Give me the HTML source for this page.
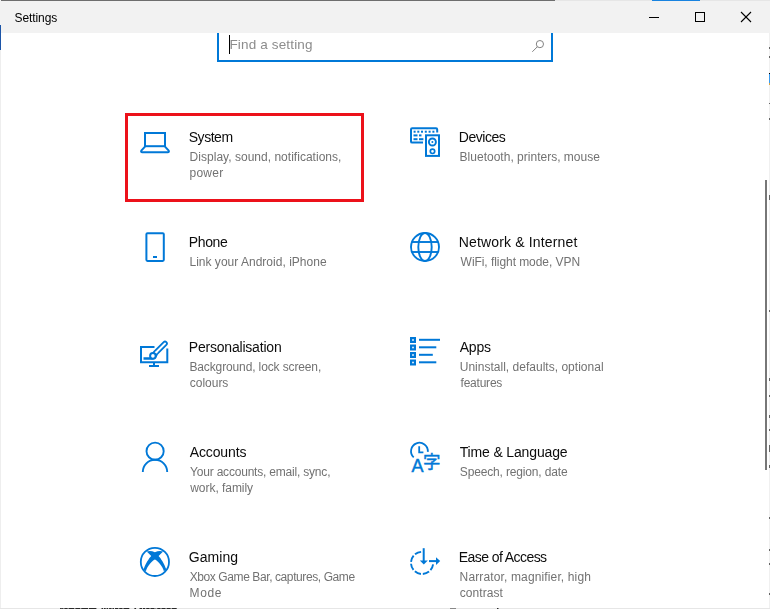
<!DOCTYPE html>
<html lang="en"><head><meta charset="utf-8"><title>Settings</title>
<style>
html,body{margin:0;padding:0;background:#fff}
body{width:770px;height:609px;position:relative;overflow:hidden;font-family:"Liberation Sans","Noto Sans CJK JP",sans-serif}
.a{position:absolute}
.x{position:absolute;white-space:nowrap;line-height:20px;height:20px}
#tb{left:0;top:0;width:770px;height:33px;background:#f2f2f2}
#topl{left:1px;top:0;width:554px;height:1px;background:#6e6e6e}
#topr{left:555px;top:0;width:215px;height:1px;background:#e6e6e6}
#topb{left:652px;top:0;width:48px;height:1px;background:#1883e0}
#le{left:0;top:33px;width:1px;height:576px;background:#eeeeee}
#leb{left:0;top:25px;width:1px;height:25px;background:#1c55a8}
#re{left:769px;top:33px;width:1px;height:576px;background:#f0f0f0}
#reb{left:769px;top:73px;width:1px;height:12px;background:linear-gradient(#000 0 1px,#3a9cf0 1px 10px,#d9a441 10px)}
#sb{left:217px;top:33px;width:332px;height:27px;border:2px solid #0078d7;border-top:none;background:#fff}
#cur{left:229px;top:35px;width:1px;height:19px;background:#000}
#red{left:125px;top:113px;width:233px;height:83px;border:3px solid #ec111a}
#thumb{left:765px;top:180px;width:2px;height:290px;background:#777}
#bot{left:0;top:608px;width:770px;height:1px;background:#e6e6e6}
svg{position:absolute;left:0;top:0}
#txt{position:absolute;left:0;top:0;width:770px;height:609px;will-change:transform}
</style></head><body>
<div class="a" id="tb"></div>
<div class="a" id="topl"></div><div class="a" id="topr"></div><div class="a" id="topb"></div>
<div class="a" id="le"></div><div class="a" id="leb"></div>
<div class="a" id="re"></div><div class="a" id="reb"></div>
<div class="a" id="sb"></div><div class="a" id="cur"></div>
<div class="a" id="red"></div>
<div class="a" id="thumb"></div>
<div class="a" id="bot"></div>
<svg width="770" height="609" viewBox="0 0 770 609" fill="none" stroke="#0078d7" stroke-width="2">
<!-- window controls -->
<g stroke="#000" stroke-width="1" shape-rendering="crispEdges">
<line x1="649" y1="17.5" x2="659" y2="17.5"/>
<rect x="695.5" y="12.5" width="9" height="9"/>
</g>
<g stroke="#000" stroke-width="1.1">
<line x1="741" y1="12" x2="751" y2="22"/><line x1="751" y1="12" x2="741" y2="22"/>
</g>
<!-- search icon -->
<g stroke="#828282" stroke-width="1">
<circle cx="539.9" cy="44.1" r="3.6"/><line x1="537.3" y1="46.8" x2="532.3" y2="51.8"/>
</g>
<!-- system: laptop -->
<rect x="145" y="133" width="20" height="13.2"/>
<path d="M145,146.6 L141.3,150.6 Q140.6,152.2 142.2,152.2 L167.8,152.2 Q169.4,152.2 168.7,150.6 L165,146.6" stroke-linejoin="round"/>
<!-- devices -->
<path d="M423,142.6 L412.2,142.6 Q411,142.6 411,141.4 L411,129.4 Q411,128.2 412.2,128.2 L436,128.2 Q437.2,128.2 437.2,129.4 L437.2,132.6"/>
<rect x="426" y="135.3" width="13" height="20.6"/>
<circle cx="432.4" cy="142" r="3.5" stroke-width="1.9"/><circle cx="432.4" cy="142" r="1" fill="#0078d7" stroke="none"/>
<circle cx="432.5" cy="151.3" r="2.2" stroke-width="1.7"/>
<g fill="#0078d7" stroke="none">
<rect x="413.6" y="130.7" width="2" height="2"/><rect x="417.3" y="130.7" width="2" height="2"/><rect x="421" y="130.7" width="2" height="2"/><rect x="424.8" y="130.7" width="2" height="2"/><rect x="428.6" y="130.7" width="2" height="2"/><rect x="432.4" y="130.7" width="2" height="2"/>
<rect x="413.5" y="134.4" width="4" height="2"/><rect x="419" y="134.4" width="2.5" height="2"/>
<rect x="413.5" y="138.2" width="4" height="2"/><rect x="419" y="138.2" width="4.4" height="2"/>
</g>
<!-- phone -->
<rect x="146.4" y="233.2" width="17.4" height="27.7" rx="1.1"/>
<rect x="153" y="256" width="4" height="2" fill="#0078d7" stroke="none"/>
<!-- globe -->
<g stroke-width="1.9">
<circle cx="425" cy="247" r="14"/><ellipse cx="425" cy="247" rx="6.7" ry="14"/>
<line x1="411.8" y1="242" x2="438.2" y2="242"/><line x1="411.8" y1="252" x2="438.2" y2="252"/>
</g>
<!-- personalisation -->
<path d="M154.5,347 L141,347 L141,362.2 L167.3,362.2 L167.3,348.5"/>
<line x1="154" y1="363" x2="154" y2="366"/><line x1="149" y1="366" x2="159" y2="366"/>
<line x1="155.5" y1="353" x2="165" y2="343.5" stroke-width="5.6" stroke-linecap="round"/>
<line x1="155.5" y1="353" x2="165" y2="343.5" stroke-width="2" stroke-linecap="round" stroke="#fff"/>
<path d="M143.5,358.5 L151,358.5 Q155,358.5 156.5,354.5" stroke-width="2.4"/>
<circle cx="152.9" cy="355.9" r="2.8" fill="#fff" stroke-width="2"/>
<line x1="155.9" y1="351.6" x2="157.4" y2="353.1" stroke="#fff" stroke-width="0.9"/>
<!-- apps -->
<g fill="#0078d7" stroke="none">
<rect x="410" y="337" width="6" height="6"/><rect x="410" y="344.5" width="6" height="6"/><rect x="410" y="352" width="6" height="6"/><rect x="410" y="359.5" width="6" height="6"/>
<rect x="419" y="338.8" width="21" height="2"/><rect x="419" y="346.3" width="17.3" height="2"/><rect x="419" y="353.8" width="13.8" height="2"/><rect x="419" y="361.3" width="17.3" height="2"/>
</g>
<g fill="#fff" stroke="none">
<rect x="412.2" y="339.2" width="1.6" height="1.6"/><rect x="412.2" y="346.7" width="1.6" height="1.6"/><rect x="412.2" y="354.2" width="1.6" height="1.6"/><rect x="412.2" y="361.7" width="1.6" height="1.6"/>
</g>
<!-- accounts -->
<circle cx="155.1" cy="451.2" r="8.6" stroke-width="1.9"/>
<path d="M142.8,472 A12.2,12.2 0 0 1 167.2,472" stroke-width="1.9"/>
<!-- time & language -->
<path d="M413.7,457.3 A8.4,8.4 0 1 1 427.8,451.9" stroke-width="1.8"/>
<path d="M419.2,446.2 L419.2,452.3 L423.4,452.3" stroke-width="1.8"/>
<text x="411.6" y="472" font-family="Liberation Sans, sans-serif" font-size="18" fill="#0078d7" stroke="#0078d7" stroke-width="0.45">A</text>
<text x="423" y="467.9" font-family="Noto Sans CJK JP, Noto Sans CJK SC, sans-serif" font-size="17.5" fill="#0078d7" stroke="#0078d7" stroke-width="0.4">字</text>
<!-- gaming: xbox -->
<circle cx="154.9" cy="561.9" r="14.1" stroke-width="1.8"/>
<path fill="#0078d7" stroke="none" d="M146.7,551.5 Q150.5,550.2 154.9,552.2 Q159.3,550.2 163.1,551.5 L158.6,556.1 C160.5,558 164.5,564 166.3,569.6 L163.9,571.2 C162.6,565.8 157.3,560.6 154.9,559.5 C152.5,560.6 147.2,565.8 145.9,571.2 L143.5,569.6 C145.3,564 149.3,558 151.2,556.1 Z"/>
<!-- ease of access -->
<path d="M421.13,551.84 A11.1,11.1 0 1 0 433.09,564.45" stroke-width="1.9" stroke-dasharray="6.684 1.937"/>
<line x1="423.7" y1="548.2" x2="423.7" y2="561"/>
<path d="M419.8,560.4 L427.8,560.4 L423.8,564.4 Z" fill="#0078d7" stroke="none"/>
<line x1="429" y1="561.1" x2="437" y2="561.1"/>
<path d="M436,557.2 L440.2,561.1 L436,565 Z" fill="#0078d7" stroke="none"/>
<g fill="#2a2a2a" stroke="none"><rect x="60.1" y="608" width="1.7" height="1"/><rect x="62.1" y="608" width="1.4" height="1"/><rect x="64.3" y="608" width="3.4" height="1"/><rect x="68.5" y="608" width="5.9" height="1"/><rect x="75.3" y="608" width="5.1" height="1"/><rect x="81.2" y="608" width="6.8" height="1"/><rect x="88.8" y="608" width="7.6" height="1"/><rect x="101.5" y="608" width="1.7" height="1"/><rect x="104.0" y="608" width="1.7" height="1"/><rect x="106.5" y="608" width="1.7" height="1"/><rect x="109.1" y="608" width="2.5" height="1"/><rect x="112.4" y="608" width="1.7" height="1"/><rect x="115.0" y="608" width="3.4" height="1"/><rect x="119.2" y="608" width="3.4" height="1"/><rect x="123.4" y="608" width="5.9" height="1"/><rect x="134.4" y="608" width="1.7" height="1"/><rect x="139.5" y="608" width="2.5" height="1"/><rect x="142.8" y="608" width="2.5" height="1"/><rect x="146.2" y="608" width="3.4" height="1"/><rect x="150.4" y="608" width="4.2" height="1"/><rect x="155.5" y="608" width="0.8" height="1"/><rect x="157.2" y="608" width="3.4" height="1"/><rect x="161.4" y="608" width="4.2" height="1"/><rect x="166.5" y="608" width="4.2" height="1"/><rect x="171.6" y="608" width="5.1" height="1"/><rect x="450" y="608" width="6" height="1" fill="#888"/><rect x="497" y="608" width="1.5" height="1"/></g>
<g fill="#666" stroke="none"><rect x="769" y="310" width="1" height="2"/><rect x="769" y="378" width="1" height="3"/><rect x="769" y="395" width="1" height="2"/><rect x="769" y="415" width="1" height="3"/><rect x="769" y="429" width="1" height="2"/><rect x="769" y="445" width="1" height="7"/><rect x="769" y="465" width="1" height="3"/><rect x="769" y="517" width="1" height="2"/><rect x="769" y="549" width="1" height="2"/><rect x="769" y="563" width="1" height="2"/><rect x="769" y="593" width="1" height="2"/><rect x="769" y="47" width="1" height="2"/><rect x="769" y="56" width="1" height="2"/><rect x="769" y="103" width="1" height="1"/><rect x="769" y="118" width="1" height="2"/><rect x="769" y="195" width="1" height="5"/></g>
</svg>

<div id="txt">
<header><span class="x w" id="e26" style="left:14.56px;top:7.84px;font-size:12px;letter-spacing:-0.096px;color:#000">Settings</span></header>
<div class="search"><span class="x p" id="e27" style="left:229.47px;top:34.92px;font-size:13.5px;letter-spacing:0.149px;color:#8c8c8c">Find a setting</span></div>
<main>
<div class="tile"><span class="x t" id="e0" style="left:188.75px;top:127.15px;font-size:14px;letter-spacing:-0.469px;color:#0c0c0c">System</span><span class="x d" id="e10" style="left:189.61px;top:147.34px;font-size:12px;letter-spacing:0.020px;color:#727272">Display, sound, notifications,</span><span class="x d" id="e11" style="left:189.58px;top:162.84px;font-size:12px;letter-spacing:0.221px;color:#727272">power</span></div>
<div class="tile"><span class="x t" id="e1" style="left:458.79px;top:127.15px;font-size:14px;letter-spacing:-0.456px;color:#0c0c0c">Devices</span><span class="x d" id="e12" style="left:459.61px;top:147.34px;font-size:12px;letter-spacing:0.009px;color:#727272">Bluetooth, printers, mouse</span></div>
<div class="tile"><span class="x t" id="e2" style="left:188.79px;top:232.15px;font-size:14px;letter-spacing:-0.358px;color:#0c0c0c">Phone</span><span class="x d" id="e13" style="left:189.44px;top:252.34px;font-size:12px;letter-spacing:0.016px;color:#727272">Link your Android, iPhone</span></div>
<div class="tile"><span class="x t" id="e3" style="left:458.79px;top:232.15px;font-size:14px;letter-spacing:0.155px;color:#0c0c0c">Network &amp; Internet</span><span class="x d" id="e14" style="left:460.61px;top:252.34px;font-size:12px;letter-spacing:-0.059px;color:#727272">WiFi, flight mode, VPN</span></div>
<div class="tile"><span class="x t" id="e4" style="left:188.79px;top:337.15px;font-size:14px;letter-spacing:-0.203px;color:#0c0c0c">Personalisation</span><span class="x d" id="e15" style="left:189.44px;top:357.34px;font-size:12px;letter-spacing:-0.127px;color:#727272">Background, lock screen,</span><span class="x d" id="e16" style="left:189.80px;top:372.84px;font-size:12px;letter-spacing:-0.019px;color:#727272">colours</span></div>
<div class="tile"><span class="x t" id="e5" style="left:459.66px;top:337.15px;font-size:14px;letter-spacing:-0.191px;color:#0c0c0c">Apps</span><span class="x d" id="e17" style="left:459.71px;top:357.34px;font-size:12px;letter-spacing:0.016px;color:#727272">Uninstall, defaults, optional</span><span class="x d" id="e18" style="left:460.52px;top:372.84px;font-size:12px;letter-spacing:-0.220px;color:#727272">features</span></div>
<div class="tile"><span class="x t" id="e6" style="left:189.66px;top:442.15px;font-size:14px;letter-spacing:-0.111px;color:#0c0c0c">Accounts</span><span class="x d" id="e19" style="left:190.05px;top:462.34px;font-size:12px;letter-spacing:-0.200px;color:#727272">Your accounts, email, sync,</span><span class="x d" id="e20" style="left:190.25px;top:477.84px;font-size:12px;letter-spacing:-0.045px;color:#727272">work, family</span></div>
<div class="tile"><span class="x t" id="e7" style="left:459.65px;top:442.15px;font-size:14px;letter-spacing:-0.144px;color:#0c0c0c">Time &amp; Language</span><span class="x d" id="e21" style="left:459.82px;top:462.34px;font-size:12px;letter-spacing:-0.158px;color:#727272">Speech, region, date</span></div>
<div class="tile"><span class="x t" id="e8" style="left:188.80px;top:547.15px;font-size:14px;letter-spacing:0.038px;color:#0c0c0c">Gaming</span><span class="x d" id="e22" style="left:189.72px;top:567.34px;font-size:12px;letter-spacing:-0.406px;color:#727272">Xbox Game Bar, captures, Game</span><span class="x d" id="e23" style="left:189.61px;top:582.84px;font-size:12px;letter-spacing:0.565px;color:#727272">Mode</span></div>
<div class="tile"><span class="x t" id="e9" style="left:458.79px;top:547.15px;font-size:14px;letter-spacing:-0.571px;color:#0c0c0c">Ease of Access</span><span class="x d" id="e24" style="left:459.61px;top:567.34px;font-size:12px;letter-spacing:0.133px;color:#727272">Narrator, magnifier, high</span><span class="x d" id="e25" style="left:459.80px;top:582.84px;font-size:12px;letter-spacing:0.059px;color:#727272">contrast</span></div>
</main>
</div>
</body></html>
